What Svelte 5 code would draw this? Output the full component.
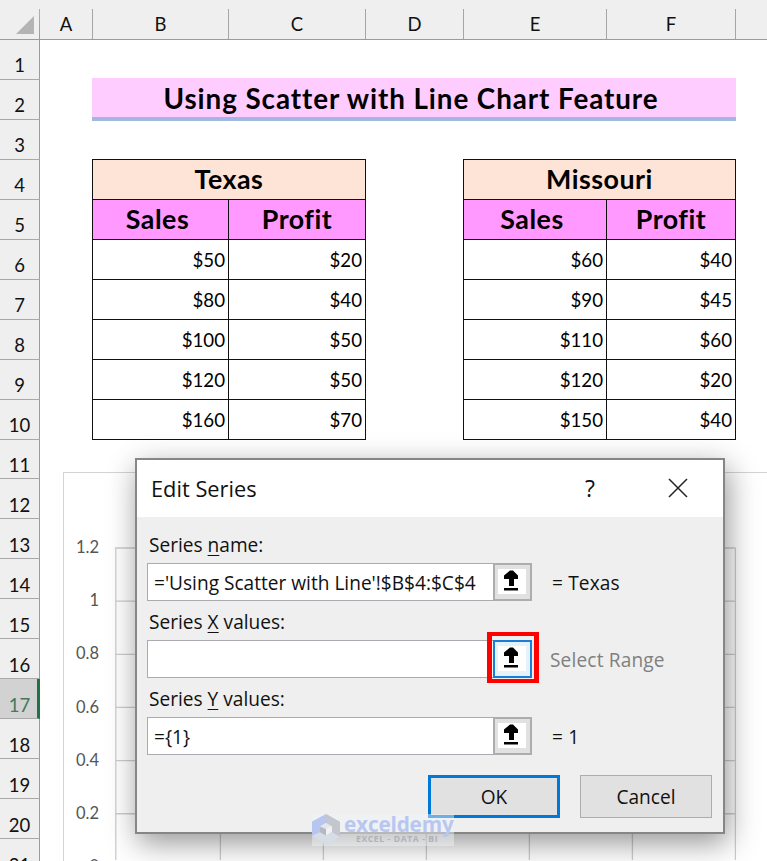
<script lang="ts">
    const columns = ["A", "B", "C", "D", "E", "F", ""];
    const rows = Array.from({length: 21}, (_, i) => i + 1);
    const activeRow = 17;

    const tables = [
        {name: "Texas", col: 3, data: [[50, 20], [80, 40], [100, 50], [120, 50], [160, 70]]},
        {name: "Missouri", col: 6, data: [[60, 40], [90, 45], [110, 60], [120, 20], [150, 40]]},
    ];

    const axis = ["1.2", "1", "0.8", "0.6", "0.4", "0.2", "0"];

    let fields = $state([
        {before: "Series ", key: "n", after: "ame:", value: "='Using Scatter with Line'!$B$4:$C$4", result: "= Texas", active: false},
        {before: "Series ", key: "X", after: " values:", value: "", result: "Select Range", active: true},
        {before: "Series ", key: "Y", after: " values:", value: "={1}", result: "= 1", active: false},
    ]);
</script>

<div class="window">
    <div class="sheet">
        <div class="corner">
            <svg width="18" height="18" viewBox="0 0 18 18"><path d="M18 0V18H0Z" fill="#b3b4b5" /></svg>
        </div>
        {#each columns as column}
        <div class="colHead"><span>{column}</span></div>
        {/each}
        {#each rows as row}
        <div class="rowHead" class:active={row === activeRow} style="grid-row: {row + 1}">{row}</div>
        {/each}

        <div class="title">Using Scatter with Line Chart Feature</div>

        {#each tables as table}
        <div class="cell name" style="grid-area: 5 / {table.col} / 6 / {table.col + 2}">{table.name}</div>
        <div class="cell head sales" style="grid-area: 6 / {table.col}">Sales</div>
        <div class="cell head" style="grid-area: 6 / {table.col + 1}">Profit</div>
        {#each table.data as pair, i}
        {#each pair as amount, j}
        <div class="cell amount" style="grid-area: {7 + i} / {table.col + j}">${amount}</div>
        {/each}
        {/each}
        {/each}
    </div>

    <div class="chart">
        <div class="axis">
            {#each axis as label}
            <span>{label}</span>
            {/each}
        </div>
        <svg class="plot" width="621" height="313" viewBox="0 0 621 313">
            <g stroke="#cdcdcd" stroke-width="1.3">
                {#each axis as _, i}
                <path d="M0 {1 + i * 53.15}H620.5" />
                <path d="M{i ? 2.4 + i * 103 : 0.8} 1V313" />
                {/each}
            </g>
        </svg>
    </div>

    <div class="dialog">
        <header>
            <h2>Edit Series</h2>
            <button class="help">?</button>
            <button class="close" aria-label="Close">
                <svg width="20" height="20" viewBox="0 0 20 20"><path d="M1 1L19 19M19 1L1 19" stroke="#222" stroke-width="1.5" /></svg>
            </button>
        </header>
        <main>
            {#each fields as field, i}
            <label for="field{i}">{field.before}<u>{field.key}</u>{field.after}</label>
            <div class="field">
                <input id="field{i}" bind:value={field.value} />
                <button class="picker" class:active={field.active} aria-label="Select range">
                    <svg width="28" height="25" viewBox="0 0 28 25">
                        <rect width="28" height="25" fill="#fff" />
                        <path d="M12 1.5H15L20 6.5V10H16V17H11V10H6V6.5Z" />
                        <rect x="6" y="19" width="14" height="2.5" />
                    </svg>
                </button>
                <span class="result" class:muted={!field.value}>{field.result}</span>
            </div>
            {/each}
            <div class="btnrow">
                <button class="primary">OK</button>
                <button>Cancel</button>
            </div>
        </main>
    </div>

    <div class="watermark">
        <svg width="28" height="31" viewBox="0 0 28 31">
            <path d="M14 0L0 7.5V22L8 18V12.5L14 9L22 13L28 8Z" fill="#b7c6f0" />
            <path d="M14 0V9L20 12.5V18L28 23V8Z" fill="#c3c6cc" />
            <path d="M0 22L8 18L14 21.5L20 18L28 23L14 31Z" fill="#d6dde6" />
            <path d="M8 12.5L14 9L20 12.5L14 15Z" fill="#e3e6ec" />
            <path d="M14 15L20 12.5V18L14 21.5Z" fill="#f0f1f3" />
            <path d="M8 12.5L14 15V21.5L8 18Z" fill="#b4b9c6" />
        </svg>
        <div>
            <div class="brand">exceldemy</div>
            <div class="tagline">EXCEL - DATA - BI</div>
        </div>
    </div>
</div>

<style>
    :global(body) {
        margin: 0;
        overflow: hidden;
    }
    .window {
        position: relative;
        width: 767px;
        height: 861px;
        overflow: hidden;
        background-color: #fff;
        font-family: Lato, "Liberation Sans", sans-serif;
        color: #111;
    }
    .sheet {
        display: grid;
        grid-template-columns: 40px 53px 136px 137px 98px 143px 129px 31px;
        grid-template-rows: 40px repeat(21, 39.96px);
    }
    .corner, .colHead {
        box-sizing: border-box;
        background-color: #efefef;
        border-bottom: 1px solid #9b9b9b;
        padding-top: 9px;
    }
    .corner {
        padding: 16px 0 0 16px;
        background: linear-gradient(#b0b0b0, #9b9b9b) right bottom / 1px 30px no-repeat #efefef;
    }
    .corner svg {
        display: block;
    }
    .colHead span {
        display: flex;
        align-items: center;
        justify-content: center;
        height: 30px;
        font-size: 18.5px;
        border-right: 1px solid #a5a5a5;
    }
    .colHead:nth-child(8) span {
        border: none;
    }
    .rowHead {
        grid-column: 1;
        box-sizing: border-box;
        display: flex;
        align-items: center;
        justify-content: center;
        padding-top: 12px;
        font-size: 18.5px;
        background-color: #efefef;
        border-right: 1px solid #9b9b9b;
        border-bottom: 1px solid #a8a8a8;
    }
    .rowHead.active {
        background-color: #d2d2d2;
        color: #3f7a60;
        border-right: 3px solid #217346;
        padding-left: 2px;
    }
    .title {
        grid-area: 3 / 3 / 4 / 8;
        margin: -2px 0 -1px -1px;
        padding: 2px 6px 0 0;
        display: flex;
        align-items: center;
        justify-content: center;
        background-color: #ffccff;
        border-bottom: 4px solid #a3b8e0;
        font-size: 27.8px;
        font-weight: 700;
        letter-spacing: 0.92px;
        color: #000;
        white-space: nowrap;
    }
    .cell {
        margin: -1px 0 0 -1px;
        border: 1px solid #111;
        display: flex;
        align-items: center;
        justify-content: center;
        font-size: 26.8px;
        font-weight: 700;
        letter-spacing: 0.5px;
        color: #000;
    }
    .name {
        background-color: #fde4d7;
    }
    .head {
        background-color: #ff99ff;
    }
    .sales {
        padding-right: 6px;
    }
    .amount {
        justify-content: flex-end;
        padding: 2px 3px 0 0;
        font-size: 18.7px;
        font-weight: 400;
        letter-spacing: 0;
    }
    .chart {
        position: absolute;
        left: 63px;
        top: 472px;
        width: 760px;
        height: 440px;
        box-sizing: border-box;
        border: 1.5px solid #d3d3d3;
        background-color: #fff;
        display: flex;
    }
    .axis {
        width: 35px;
        padding-top: 48px;
        text-align: right;
        font-size: 16.5px;
        color: #555;
    }
    .axis span {
        display: block;
        height: 53.2px;
        line-height: 53.2px;
    }
    .plot {
        margin: 74px 0 0 16px;
    }
    .dialog {
        position: absolute;
        left: 135px;
        top: 458px;
        width: 590px;
        height: 376px;
        box-sizing: border-box;
        border: 2px solid #868686;
        background-color: #efefef;
        box-shadow: 3px 9px 28px rgba(0, 0, 0, 0.42);
        font-family: "Open Sans", "Noto Sans", sans-serif;
        font-size: 19.1px;
    }
    .dialog header {
        display: flex;
        align-items: center;
        height: 56px;
        padding: 0 1px 1px 14px;
        background-color: #fff;
    }
    h2 {
        flex-grow: 1;
        margin: 0;
        font-size: 21.8px;
        font-weight: 400;
    }
    button, input {
        box-sizing: border-box;
        margin: 0;
        font: inherit;
        color: inherit;
    }
    header button {
        display: flex;
        justify-content: center;
        align-items: center;
        width: 88px;
        padding: 0;
        background: none;
        border: none;
    }
    .help {
        font-size: 23px;
    }
    main {
        padding: 11px 10px 0 10px;
    }
    label {
        display: block;
        height: 35px;
        padding-left: 2px;
        line-height: 35px;
    }
    u {
        text-underline-offset: 3px;
        text-decoration-thickness: 1px;
    }
    .field {
        display: flex;
        align-items: center;
        height: 38px;
        margin-bottom: 4px;
    }
    input {
        width: 347px;
        height: 38px;
        padding: 1px 0 0 6px;
        border: 1.5px solid #a9abb0;
        background-color: #fff;
        outline: none;
    }
    .picker {
        position: relative;
        display: flex;
        justify-content: center;
        align-items: center;
        width: 39px;
        height: 38px;
        margin-left: -1px;
        padding: 0 2px 1px 0;
        background-color: #e1e1e1;
        border: 2px solid #adadad;
    }
    .picker.active {
        background-color: #e5f1fb;
        border-color: #1a7fd4;
    }
    /* red callout frame round the picker that is in use */
    .picker.active::after {
        content: "";
        position: absolute;
        left: -8px;
        top: -10px;
        box-sizing: border-box;
        width: 52px;
        height: 51px;
        border: 5px solid #fe0000;
        border-width: 4px 5px;
    }
    .result {
        margin-left: 20px;
        padding-top: 1px;
        letter-spacing: 0.15px;
    }
    .muted {
        margin-left: 18px;
        color: #808080;
    }
    .btnrow {
        display: flex;
        justify-content: flex-end;
        gap: 20px;
        padding: 16px 1px 0 0;
    }
    .btnrow button {
        width: 132px;
        height: 43px;
        padding: 0;
        background-color: #e1e1e1;
        border: 1.5px solid #adadad;
    }
    .btnrow .primary {
        border: 3px solid #0078d7;
    }
    .watermark {
        position: absolute;
        left: 312px;
        top: 814px;
        width: 142px;
        height: 32px;
        display: flex;
        gap: 4px;
        background-color: rgba(240, 243, 248, 0.45);
        font-family: "Open Sans", sans-serif;
        font-weight: 700;
    }
    .brand {
        height: 20px;
        line-height: 20px;
        font-size: 20.8px;
        font-weight: 700;
        letter-spacing: -0.2px;
        color: #b9c7f0;
    }
    .tagline {
        padding-left: 12px;
        line-height: 11px;
        font-size: 8.6px;
        letter-spacing: 0.6px;
        white-space: nowrap;
        color: #b0b2b7;
    }
</style>
